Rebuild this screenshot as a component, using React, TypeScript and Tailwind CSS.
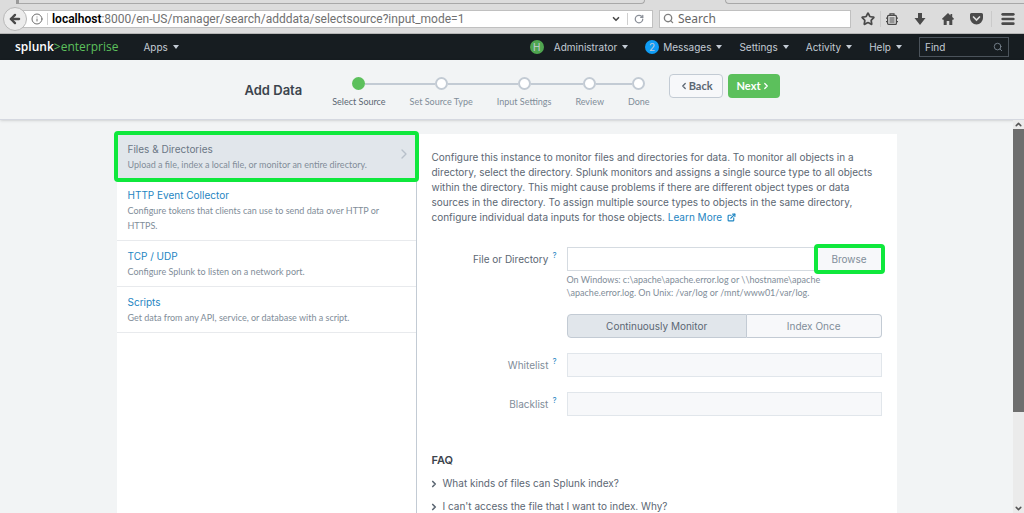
import React from 'react';
import { ArrowLeft, ChevronDown, ChevronLeft, ChevronRight, ChevronUp, ExternalLink, Info, Menu, RotateCw, Search, Star } from 'lucide-react';

const steps = ['Select Source', 'Set Source Type', 'Input Settings', 'Review', 'Done'];

const sources = [
  { title: 'Files & Directories', text: 'Upload a file, index a local file, or monitor an entire directory.' },
  { title: 'HTTP Event Collector', text: 'Configure tokens that clients can use to send data over HTTP or HTTPS.' },
  { title: 'TCP / UDP', text: 'Configure Splunk to listen on a network port.' },
  { title: 'Scripts', text: 'Get data from any API, service, or database with a script.' },
];

const questions = ['What kinds of files can Splunk index?', "I can't access the file that I want to index. Why?"];

const Caret: React.FC = () => (
  <svg viewBox="0 0 6 4" className="h-1 w-[6px] shrink-0" fill="currentColor">
    <path d="M0 0h6L3 4z" />
  </svg>
);

const BrowserBar: React.FC = () => (
  <div className="shrink-0 bg-[#dcdcdc] font-['Noto_Sans',sans-serif] text-[#4a4a4a]">
    <div className="flex h-1 overflow-hidden">
      <div className="ml-4 h-1 w-[3px] bg-[#9a9a9a]" />
      <div className="h-1 w-[626px] rounded-br-sm border-r border-b border-[#a8a8a8]" />
      <div className="ml-20 h-1 flex-1 rounded-bl-sm border-b border-l border-[#a8a8a8]" />
    </div>
    <div className="flex h-[30px] items-center border-b border-[#b5b5b5] pr-2">
      <button
        aria-label="Back"
        className="z-10 ml-[3px] flex h-6 w-6 shrink-0 items-center justify-center rounded-full border border-[#b8b8b8] bg-[#ececec]"
      >
        <ArrowLeft className="h-[14px] w-[14px]" strokeWidth={4} />
      </button>
      <div className="-ml-2 flex h-[18px] w-[634px] items-center border border-[#c0c0c0] bg-white pl-[11px]">
        <Info className="h-3 w-3 shrink-0 text-[#707070]" />
        <div className="mx-1 h-3 w-px bg-[#cfcfcf]" />
        <div className="flex-1 font-['Roboto',sans-serif] text-[12px] leading-4 whitespace-nowrap text-[#707070]">
          <span className="font-semibold text-black">localhost</span>:8000/en-US/manager/search/adddata/selectsource?input_mode=1
        </div>
        <ChevronDown className="h-[10px] w-[10px]" strokeWidth={4} />
        <div className="mx-[6px] h-3 w-px bg-[#cfcfcf]" />
        <RotateCw className="mr-2 h-[10px] w-[10px] text-[#8a8f98]" strokeWidth={3} />
      </div>
      <label className="ml-[6px] flex h-[18px] flex-1 items-center gap-1 border border-[#c0c0c0] bg-white pl-[3px]">
        <Search className="h-[11px] w-[11px] shrink-0 text-[#808080]" strokeWidth={3} />
        <input
          aria-label="Search"
          placeholder="Search"
          className="w-full min-w-0 text-[12px] leading-4 outline-none placeholder:text-[#666666]"
        />
      </label>
      <div className="ml-[10px] flex shrink-0 items-center">
        <button aria-label="Bookmark">
          <Star className="h-[14px] w-[14px]" strokeWidth={3} />
        </button>
        <div className="mx-[5px] h-4 w-px bg-[#cacaca]" />
        <button aria-label="Library">
          <svg viewBox="0 0 12 12" className="h-3 w-3" fill="none" stroke="currentColor" strokeWidth="1.2">
            <rect x="1.600" y="2.400" width="8.800" height="9" rx="1" />
            <path d="M4 2.400V.8h4v1.600M0 5.200h1.600M0 8.600h1.600M10.400 5.200H12M10.400 8.600H12M3.500 5h5M3.500 7h5M3.500 9h5" />
          </svg>
        </button>
        <button aria-label="Downloads" className="ml-4">
          <svg viewBox="0 0 12 12" className="h-3 w-3" fill="currentColor">
            <path d="M4 0h4v5h3.5L6 12 .5 5H4z" />
          </svg>
        </button>
        <button aria-label="Home" className="ml-4">
          <svg viewBox="0 0 12 12" className="h-3 w-3" fill="currentColor">
            <path d="M6 0l2.500 2.400V1h1.700v3L12 5.800 11.300 6.800H10.300V12H7.300V8H4.700v4h-3V6.800H.7L0 5.800z" />
          </svg>
        </button>
        <button aria-label="Pocket" className="ml-4">
          <svg viewBox="0 0 13 12" className="h-3 w-[13px]">
            <path d="M1.500 0h10A1.500 1.500 0 0 1 13 1.500V5a6.500 6.500 0 0 1-13 0V1.500A1.500 1.500 0 0 1 1.500 0z" fill="currentColor" />
            <path d="M3.500 4l3 3 3-3" fill="none" stroke="#dcdcdc" strokeWidth="1.700" strokeLinecap="round" />
          </svg>
        </button>
        <div className="mx-2 h-4 w-px bg-[#cacaca]" />
        <button aria-label="Menu">
          <Menu className="h-4 w-4" strokeWidth={4} />
        </button>
      </div>
    </div>
  </div>
);

const NavItem: React.FC<{ label: string }> = ({ label }) => (
  <button className="flex items-center gap-[5px]">
    {label}
    <Caret />
  </button>
);

const NavBar: React.FC = () => (
  <nav className="flex h-[26px] shrink-0 items-center bg-[#171d21] pr-[15px] pl-[15px] text-[10px] text-[#c3cbd4]">
    <a href="#" className="font-['Open_Sans',sans-serif] text-[12px] font-semibold text-white">
      splunk<span className="font-normal text-[#5cc05c]">&gt;enterprise</span>
    </a>
    <div className="ml-[25px] flex-1">
      <NavItem label="Apps" />
    </div>
    <div className="flex items-center gap-[17px]">
      <div className="flex items-center gap-[10px]">
        <span className="flex h-[14px] w-[14px] items-center justify-center rounded-full bg-[#4fa550]">H</span>
        <NavItem label="Administrator" />
      </div>
      <div className="flex items-center gap-1">
        <span className="flex h-[14px] w-[14px] items-center justify-center rounded-full bg-[#0f9cf5]">2</span>
        <NavItem label="Messages" />
      </div>
      <NavItem label="Settings" />
      <NavItem label="Activity" />
      <NavItem label="Help" />
    </div>
    <label className="ml-[17px] flex h-5 w-[90px] items-center border border-[#4b535b] px-[5px]">
      <input aria-label="Find" placeholder="Find" className="w-full min-w-0 outline-none placeholder:text-[#c3cbd4]" />
      <Search className="h-[10px] w-[10px] shrink-0 text-[#818d99]" />
    </label>
  </nav>
);

const WizardHeader: React.FC = () => (
  <header className="flex h-[60px] shrink-0 justify-center border-b border-[#d5d8e0] bg-[#f2f4f5] pt-[14px] shadow-sm">
    <h1 className="pt-[7px] text-[13px] leading-[18px] font-semibold text-[#3c444d]">Add Data</h1>
    <ol className="ml-[18px] flex font-['Lato',sans-serif] text-[9px] leading-3 text-[#818d99]">
      {steps.map((step, i) => (
        <li key={step} className="pt-[3px]">
          <div className="flex items-center">
            <div className={i === 0 ? 'flex-1' : 'h-[2px] flex-1 bg-[#c3cbd4]'} />
            <div
              className={
                i === 0
                  ? 'h-[13px] w-[13px] rounded-full bg-[#5cc05c]'
                  : 'h-[13px] w-[13px] rounded-full border-2 border-[#c3cbd4] bg-white'
              }
            />
            <div className={i === steps.length - 1 ? 'flex-1' : 'h-[2px] flex-1 bg-[#c3cbd4]'} />
          </div>
          <div className={i === 0 ? 'mt-[6px] px-3 text-[#5c6773]' : 'mt-[6px] px-3'}>{step}</div>
        </li>
      ))}
    </ol>
    <div className="ml-[7px] flex h-6 gap-[5px] font-['Lato',sans-serif] text-[11px] font-bold">
      <button className="flex items-center rounded-sm border border-[#c3cbd4] bg-[#f7f8fa] px-[9px] text-[#5c6773]">
        <ChevronLeft className="h-[10px] w-[10px]" strokeWidth={3} />
        Back
      </button>
      <button className="flex items-center rounded-sm bg-[#5cc05c] px-[9px] text-white">
        Next
        <ChevronRight className="h-[10px] w-[10px]" strokeWidth={3} />
      </button>
    </div>
  </header>
);

const SourceList: React.FC = () => (
  <ul className="w-[300px] shrink-0 border-r border-[#c3cbd4]">
    {sources.map((source, i) => (
      <li key={source.title} className="relative border-b border-[#e8eaed]">
        <a href="#" className={i === 0 ? 'block bg-[#e1e6eb] pt-2 pr-7 pb-[7px] pl-[11px]' : 'block pt-2 pr-7 pb-[7px] pl-[11px]'}>
          <div className={i === 0 ? 'text-[10px] leading-[15px] text-[#6b7785]' : 'text-[10px] leading-[15px] text-[#1e85c2]'}>
            {source.title}
          </div>
          <p className="font-['Lato',sans-serif] text-[9px] leading-[15px] text-[#818d99]">{source.text}</p>
        </a>
        {i === 0 && (
          <>
            <ChevronRight className="absolute top-3 right-1 h-4 w-4 text-[#b8c0ca]" />
            <div className="absolute -inset-[3px] rounded-sm border-4 border-[#0fe83c]" />
          </>
        )}
      </li>
    ))}
  </ul>
);

const FieldLabel: React.FC<{ id: string; label: string; muted?: boolean }> = ({ id, label, muted }) => (
  <label htmlFor={id} className={muted ? 'flex h-6 w-[125px] justify-end text-[#818d99]' : 'flex h-6 w-[125px] justify-end text-[#5c6773]'}>
    <span className="leading-6">{label}</span>
    <span className="ml-1 text-[8px] leading-4 text-[#1e85c2]">?</span>
  </label>
);

const SourceForm: React.FC = () => (
  <section className="min-w-0 flex-1 px-[15px] pt-4 text-[10px] text-[#5c6773]">
    <p className="leading-[15px]">
      Configure this instance to monitor files and directories for data. To monitor all objects in a directory, select the
      directory. Splunk monitors and assigns a single source type to all objects within the directory. This might cause
      problems if there are different object types or data sources in the directory. To assign multiple source types to
      objects in the same directory, configure individual data inputs for those objects.{' '}
      <a href="#" className="text-[#1e85c2]">
        Learn More <ExternalLink className="ml-[2px] inline h-[9px] w-[9px] align-[-1px]" strokeWidth={3} />
      </a>
    </p>
    <form className="mt-[22px] flex flex-col gap-[15px]">
      <div className="flex gap-[10px]">
        <FieldLabel id="path" label="File or Directory" />
        <div className="flex-1">
          <div className="flex h-6">
            <input id="path" className="min-w-0 flex-1 border border-[#d5dbe1] px-2 outline-none" />
            <button type="button" className="relative w-[65px] border border-[#d5dbe1] bg-[#f7f8fa] text-[#818d99]">
              Browse
              <span className="absolute -inset-1 rounded-sm border-4 border-[#0fe83c]" />
            </button>
          </div>
          <p className="mt-[2px] font-['Lato',sans-serif] text-[9px] leading-[13px] text-[#818d99]">
            On Windows: c:\apache\apache.error.log or \\hostname\apache
            <br />
            \apache.error.log. On Unix: /var/log or /mnt/www01/var/log.
          </p>
        </div>
      </div>
      <div className="ml-[135px] flex h-6">
        <button type="button" className="flex-[4] rounded-l-sm border border-[#c3cbd4] bg-[#e1e6eb]">
          Continuously Monitor
        </button>
        <button type="button" className="flex-[3] rounded-r-sm border border-l-0 border-[#c3cbd4] bg-[#f7f8fa] text-[#818d99]">
          Index Once
        </button>
      </div>
      <div className="flex gap-[10px]">
        <FieldLabel id="whitelist" label="Whitelist" muted />
        <input id="whitelist" disabled className="min-w-0 flex-1 border border-[#e1e6eb] bg-[#f7f8fa] px-2" />
      </div>
      <div className="flex gap-[10px]">
        <FieldLabel id="blacklist" label="Blacklist" muted />
        <input id="blacklist" disabled className="min-w-0 flex-1 border border-[#e1e6eb] bg-[#f7f8fa] px-2" />
      </div>
    </form>
    <h2 className="mt-[36px] text-[11px] leading-4 font-semibold text-[#3c444d]">FAQ</h2>
    <ul className="mt-2 flex flex-col gap-2 pb-10">
      {questions.map((question) => (
        <li key={question}>
          <button className="flex items-center leading-[15px]">
            <ChevronRight className="-ml-[3px] mr-1 h-[10px] w-[10px]" strokeWidth={4} />
            {question}
          </button>
        </li>
      ))}
    </ul>
  </section>
);

const App: React.FC = () => {
  return (
    <div className="flex h-screen flex-col overflow-hidden bg-[#f2f4f5] font-['Inter',sans-serif]">
      <BrowserBar />
      <NavBar />
      <WizardHeader />
      <div className="flex min-h-0 flex-1">
        <main className="flex-1 overflow-hidden pt-[14px]">
          <div className="mx-auto flex min-h-full w-[77%] bg-white">
            <SourceList />
            <SourceForm />
          </div>
        </main>
        <div className="flex w-[11px] flex-col items-center bg-[#ebebeb] text-[#555555]">
          <ChevronUp className="h-[9px] w-[9px] shrink-0" strokeWidth={4} />
          <div className="h-[72%] w-full bg-[#6e6e6e]" />
          <div className="flex-1" />
          <ChevronDown className="h-[9px] w-[9px] shrink-0" strokeWidth={4} />
        </div>
      </div>
    </div>
  );
};

export default App;
